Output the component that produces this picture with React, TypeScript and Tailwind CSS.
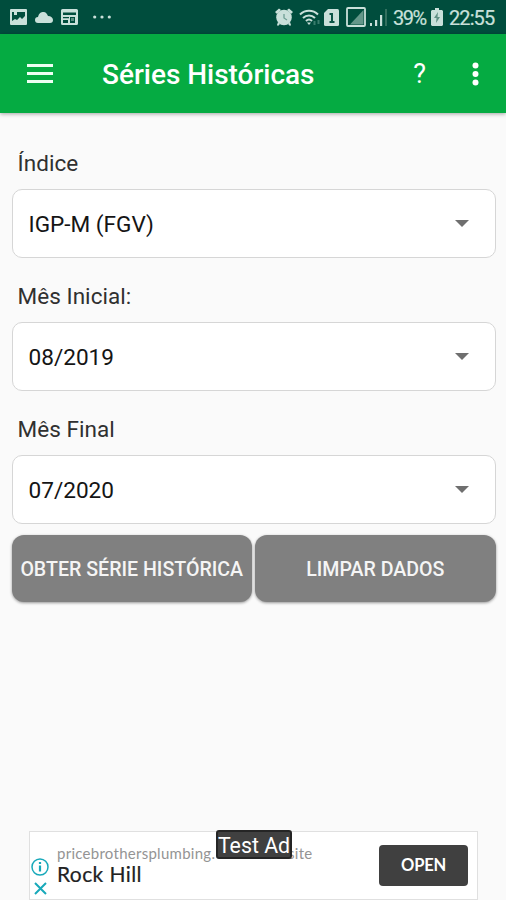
import { useState } from "react";

type SelectFieldProps = {
  id: string;
  label: string;
  value: string;
  options: string[];
  onChange: (value: string) => void;
};

function SelectField({ id, label, value, options, onChange }: SelectFieldProps) {
  return (
    <div className="h-[133px]">
      <label
        htmlFor={id}
        className="block h-[52px] pl-1.5 pt-[11px] text-[22.5px] leading-[28px] tracking-[0.05px] text-[#303030]"
      >
        {label}
      </label>
      <div className="relative -mt-px h-[69px]">
        <select
          id={id}
          value={value}
          onChange={(e) => onChange(e.target.value)}
          className="h-full w-full appearance-none rounded-[10px] border-[1.5px] border-[#d6d6d6] bg-white pl-4 pr-14 pt-0.5 text-[22.6px] text-[#151515]"
        >
          {options.map((option) => (
            <option key={option}>{option}</option>
          ))}
        </select>
        <svg
          viewBox="0 0 14 7"
          className="pointer-events-none absolute right-[27px] top-[31px] h-[7px] w-3.5 fill-[#6f6f6f]"
        >
          <path d="M0 0h14L7 7z" />
        </svg>
      </div>
    </div>
  );
}

function StatusBar() {
  return (
    <div className="flex h-[34px] items-center bg-[#004d3d] pl-2.5 pr-[11px] text-[#c9e0da]">
      <svg viewBox="0 0 17 16" className="h-4 w-[17px] fill-current">
        <path
          fillRule="evenodd"
          d="M1 0h15a1 1 0 0 1 1 1v14a1 1 0 0 1-1 1H1a1 1 0 0 1-1-1V1a1 1 0 0 1 1-1zM2 3v9l3-2 2 1 3-3 2 2 3-3V3H7v3H4V3z"
        />
      </svg>
      <svg viewBox="0 0 18 11" className="ml-2 h-[11px] w-[18px] fill-current">
        <path d="M3 11a3 3 0 0 1 0-6C4 1 6 0 8.500 0 11 0 12 2 13 4c3 0 5 2 5 4a3 3 0 0 1-3 3z" />
      </svg>
      <svg viewBox="0 0 17 16" className="ml-2 h-4 w-[17px] fill-current">
        <path
          fillRule="evenodd"
          d="M1.500 0h14A1.500 1.500 0 0 1 17 1.500v13a1.500 1.500 0 0 1-1.500 1.500h-14A1.500 1.500 0 0 1 0 14.500v-13A1.500 1.500 0 0 1 1.500 0zM2 3.500V6h13V3.500zM2 8v1.300h6V8zm0 3v3h5v-3zM9 8v6h5V8z"
        />
        <path d="M10 9h3v3h-3z" opacity=".45" />
      </svg>
      <svg viewBox="0 0 18 4" className="ml-[15px] h-1 w-[18px] fill-current">
        <circle cx="1.700" cy="2" r="1.600" />
        <circle cx="9" cy="2" r="1.600" />
        <circle cx="16.300" cy="2" r="1.600" />
      </svg>

      <svg viewBox="0 0 18 18" className="ml-auto h-[18px] w-[18px] fill-current">
        <path d="M0 4 4 .5 6 2 2 6zM18 4 14 .5 12 2l4 4zM3 14l2 2-2 2-1-1zM15 14l-2 2 2 2 1-1z" />
        <circle cx="9" cy="9.500" r="7.800" />
        <path d="M9 6v4l3 2" fill="none" stroke="#6f9f94" strokeWidth="1.300" />
      </svg>
      <svg
        viewBox="0 0 22 17"
        className="ml-1.5 h-[17px] w-[22px] fill-none stroke-current stroke-2"
      >
        <path d="M1 5.500c5-5 13-5 18 0M4 9c3.500-3.500 8.500-3.500 12 0M7 12c2-2 4-2 6 0" />
        <path d="m10 16-2-2.500h4z" fill="currentColor" stroke="none" />
        <path d="M15.500 12v4M19.500 11v4" className="stroke-[#397c6c]" />
      </svg>
      <svg viewBox="0 0 15 17" className="ml-[3px] h-[17px] w-[15px]">
        <path
          d="M4 0h9.500A1.500 1.500 0 0 1 15 1.500v14a1.500 1.500 0 0 1-1.500 1.500h-12A1.500 1.500 0 0 1 0 15.500V4z"
          fill="currentColor"
        />
        <path d="M5.500 5H8v8M5.500 13h5" fill="none" stroke="#0b5546" strokeWidth="2" />
      </svg>
      <svg viewBox="0 0 20 20" className="ml-[7px] h-5 w-5">
        <path d="M17.500 3v14.500H4z" fill="#64978a" />
        <rect x="1" y="1" width="18" height="18" rx="1" fill="none" stroke="currentColor" strokeWidth="1.800" />
      </svg>
      <svg viewBox="0 0 17 17" className="ml-1 h-[17px] w-[17px] fill-current">
        <path d="M0 14h2v3H0zM5 11h2.200v6H5zM10 6h2.200v11H10z" />
        <path d="M15 0h2v17h-2z" fill="#32705f" />
      </svg>
      <span className="ml-1.5 w-[34px] whitespace-nowrap pt-px text-[20px] leading-none tracking-[-1.5px] [-webkit-text-stroke:0.2px_#c9e0da]">
        39%
      </span>
      <svg viewBox="0 0 12 18" className="ml-1 h-[18px] w-3">
        <path d="M4 0h4v2h3l1 1v14l-1 1H1l-1-1V3l1-1h3z" fill="currentColor" />
        <path d="M7 4 3 10h2.500L5 15l4-6H6.500z" fill="#5f9084" />
      </svg>
      <span className="ml-[6px] w-[46px] whitespace-nowrap pt-px text-[20px] leading-none tracking-[-0.9px] [-webkit-text-stroke:0.2px_#c9e0da]">
        22:55
      </span>
    </div>
  );
}

function AppBar() {
  return (
    <header className="flex h-[79px] items-center bg-[#05ab42] pl-[27px] pr-[27px] text-white shadow-[0_1px_4px_rgba(0,0,0,0.35)]">
      <button type="button" aria-label="Menu" className="flex w-[26px] flex-col gap-[5px]">
        <span className="h-[3px] bg-[#edfff2]" />
        <span className="h-[3px] bg-[#edfff2]" />
        <span className="h-[3px] bg-[#edfff2]" />
      </button>
      <h1 className="ml-[49px] whitespace-nowrap pt-0.5 text-[28px] font-medium leading-none tracking-[-0.02px]">
        Séries Históricas
      </h1>
      <button type="button" className="ml-auto pt-px text-[27px] leading-none">
        ?
      </button>
      <button type="button" aria-label="Mais opções" className="ml-[46px]">
        <svg viewBox="0 0 7 24" className="h-6 w-[7px] fill-white">
          <circle cx="3.500" cy="3.500" r="3" />
          <circle cx="3.500" cy="12" r="3" />
          <circle cx="3.500" cy="20.500" r="3" />
        </svg>
      </button>
    </header>
  );
}

function AdBanner() {
  return (
    <div className="relative ml-[29px] flex h-[69px] w-[449px] border border-[#e0e0e0] bg-white">
      <div className="ml-px mt-[26px] flex w-[18px] flex-col items-center gap-[6px]">
        <svg viewBox="0 0 18 18" className="h-[18px] w-[18px] fill-none stroke-[#18a9ba]">
          <circle cx="9" cy="9" r="8" strokeWidth="1.500" />
          <path d="M9 7.500v6M9 4v2" strokeWidth="2.200" />
        </svg>
        <svg viewBox="0 0 13 13" className="h-[13px] w-[13px] fill-none stroke-[#18a9ba]">
          <path d="m1 1 11 11M12 1 1 12" strokeWidth="2" />
        </svg>
      </div>
      <div className="ml-2 pt-[12px] font-['Lato',sans-serif]">
        <p className="flex whitespace-nowrap text-[15px] leading-[18px] tracking-[0.27px] text-[#949494]">
          <span className="w-[231px]">pricebrothersplumbing.</span>
          <span>site</span>
        </p>
        <p className="-mt-px text-[21px] leading-[26px] tracking-[0.4px] text-[#222] [-webkit-text-stroke:0.2px_#222]">
          Rock Hill
        </p>
      </div>
      <button
        type="button"
        className="ml-auto mr-[9px] mt-[13px] h-[41px] w-[89px] rounded bg-[#404040] font-['Lato',sans-serif] text-[16.5px] font-bold tracking-[-0.2px] text-white"
      >
        OPEN
      </button>
      <div className="absolute left-[186px] top-[-2px] flex h-[29px] w-[76px] items-center justify-center whitespace-nowrap rounded-[3px] border-2 border-[#252525] bg-[#404040] pt-0.5 text-[21.3px] leading-none text-white">
        Test Ad
      </div>
    </div>
  );
}

export default function App() {
  const [indice, setIndice] = useState("IGP-M (FGV)");
  const [mesInicial, setMesInicial] = useState("08/2019");
  const [mesFinal, setMesFinal] = useState("07/2020");

  const limparDados = () => {
    setIndice("IGP-M (FGV)");
    setMesInicial("08/2019");
    setMesFinal("07/2020");
  };

  return (
    <div className="flex h-[900px] w-[506px] flex-col overflow-hidden bg-[#fafafa] font-['Roboto',sans-serif]">
      <StatusBar />
      <AppBar />
      <main className="flex-1 pl-[11.5px] pr-[10.5px] pt-[25px]">
        <SelectField
          id="indice"
          label="Índice"
          value={indice}
          options={["IGP-M (FGV)", "IPCA (IBGE)", "INPC (IBGE)"]}
          onChange={setIndice}
        />
        <SelectField
          id="mes-inicial"
          label="Mês Inicial:"
          value={mesInicial}
          options={["08/2019", "09/2019", "10/2019"]}
          onChange={setMesInicial}
        />
        <SelectField
          id="mes-final"
          label="Mês Final"
          value={mesFinal}
          options={["07/2020", "06/2020", "05/2020"]}
          onChange={setMesFinal}
        />
        <div className="-mt-0.5 flex gap-[3px]">
          <button
            type="button"
            className="h-[67px] w-0 flex-1 whitespace-nowrap rounded-xl bg-[#808080] pt-0.5 text-[19.6px] font-medium text-[#f5f5f5] shadow-[0_1px_3px_rgba(0,0,0,0.4)]"
          >
            OBTER SÉRIE HISTÓRICA
          </button>
          <button
            type="button"
            onClick={limparDados}
            className="h-[67px] w-0 flex-1 whitespace-nowrap rounded-xl bg-[#808080] pt-0.5 text-[19.6px] font-medium text-[#f5f5f5] shadow-[0_1px_3px_rgba(0,0,0,0.4)]"
          >
            LIMPAR DADOS
          </button>
        </div>
      </main>
      <AdBanner />
    </div>
  );
}
